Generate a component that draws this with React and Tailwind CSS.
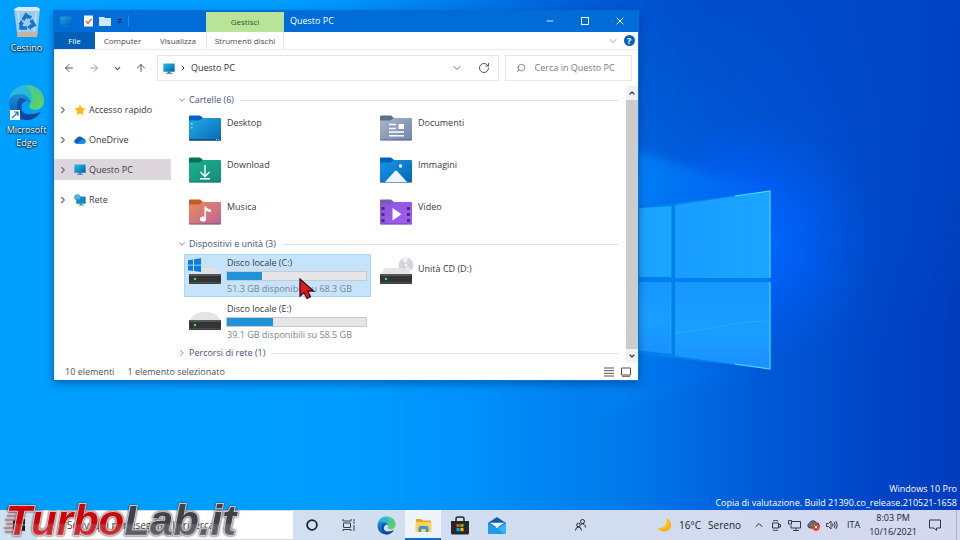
import { useState } from "react"
import { ArrowLeft, ArrowRight, ArrowUp, ChevronDown, ChevronRight, ChevronUp, Minus, RotateCw, Search, Square, X } from "lucide-react"

const folders = [
    { name: "Desktop", tab: "#0560c8", from: "#22aee8", to: "#0a68b8" },
    { name: "Documenti", tab: "#5f7288", from: "#a5b6c8", to: "#7385ae" },
    { name: "Download", tab: "#08705a", from: "#1fb08a", to: "#128c80" },
    { name: "Immagini", tab: "#0560c0", from: "#1597e6", to: "#0766b8" },
    { name: "Musica", tab: "#c0601c", from: "#f08a58", to: "#b8659c" },
    { name: "Video", tab: "#7a5cb4", from: "#8d55dc", to: "#a25cf2" },
]

const drives = [
    { name: "Disco locale (C:)", free: 51.3, total: 68.3, system: true },
    { name: "Unità CD (D:)", cd: true },
    { name: "Disco locale (E:)", free: 39.1, total: 58.5 },
]

const Wallpaper = () => (
    <svg className="absolute inset-0 h-full w-full" viewBox="0 0 960 540" preserveAspectRatio="none" aria-hidden="true">
        <defs>
            <linearGradient id="sky" x1="0" x2="1" y1="0" y2="0">
                <stop offset="0" stopColor="#00a0ff" />
                <stop offset=".35" stopColor="#009dff" />
                <stop offset=".5" stopColor="#0090fa" />
                <stop offset=".66" stopColor="#0078ea" />
                <stop offset=".8" stopColor="#0058d6" />
                <stop offset=".92" stopColor="#0044c6" />
                <stop offset="1" stopColor="#003cbc" />
            </linearGradient>
            <radialGradient id="dusk" cx="700" cy="-30" r="420" gradientUnits="userSpaceOnUse">
                <stop offset="0" stopColor="#0044c4" stopOpacity=".85" />
                <stop offset=".4" stopColor="#0048c8" stopOpacity=".5" />
                <stop offset="1" stopColor="#0060d8" stopOpacity="0" />
            </radialGradient>
            <radialGradient id="glow" cx="745" cy="240" r="130" gradientUnits="userSpaceOnUse">
                <stop offset="0" stopColor="#006cff" />
                <stop offset=".5" stopColor="#0062ff" stopOpacity=".6" />
                <stop offset="1" stopColor="#0058f0" stopOpacity="0" />
            </radialGradient>
            <linearGradient id="beam" x1="0" x2="1" y1="0" y2="0">
                <stop offset="0" stopColor="#008cff" stopOpacity=".9" />
                <stop offset="1" stopColor="#0078ff" stopOpacity=".1" />
            </linearGradient>
            <filter id="soft" x="-20%" y="-20%" width="140%" height="140%">
                <feGaussianBlur stdDeviation="5" />
            </filter>
            <linearGradient id="pane" x1="0" x2="1" y1="0" y2="0">
                <stop offset="0" stopColor="#189cff" />
                <stop offset="1" stopColor="#1aa6ff" />
            </linearGradient>
            <linearGradient id="pane2" x1="0" x2="0" y1="0" y2="1">
                <stop offset="0" stopColor="#1697ff" />
                <stop offset=".55" stopColor="#189fff" />
                <stop offset="1" stopColor="#1c90ff" />
            </linearGradient>
        </defs>
        <path d="M0 0H960V540H0Z" fill="url(#sky)" />
        <path d="M0 0H960V540H0Z" fill="url(#dusk)" />
        <path d="M560 60H960V420H560Z" fill="url(#glow)" />
        <path d="M600 140L770 191L600 215Z" fill="url(#beam)" filter="url(#soft)" />
        <path d="M600 345L770 369L720 384L600 410Z" fill="url(#beam)" opacity=".3" filter="url(#soft)" />
        <path d="M600 212L770 191V369L600 350Z" fill="#0080ee" />
        <path d="M600 211L671 206V277H600Z" fill="url(#pane)" />
        <path d="M675 205L770 191V278H675Z" fill="url(#pane)" />
        <path d="M600 282H671V354L600 346Z" fill="url(#pane2)" />
        <path d="M675 282H770V369L675 356Z" fill="url(#pane2)" />
        <path d="M675 333C710 330 735 321 770 321" stroke="#30b0ff" fill="none" opacity=".7" />
        <path d="M671 206V278M671 283V354" stroke="#30b0ff" strokeWidth=".6" />
        <path d="M735 196L770 191V278M770 282V369L735 364" stroke="#48d8ff" strokeWidth="1.200" fill="none" />
    </svg>
)

const Monitor = ({ className }) => (
    <svg className={className} viewBox="0 0 12 11" aria-hidden="true">
        <defs>
            <linearGradient id="screen" x1="0" x2="1" y1="0" y2="1">
                <stop stopColor="#25c3e2" />
                <stop offset="1" stopColor="#075fb0" />
            </linearGradient>
        </defs>
        <rect x=".3" y=".5" width="11.4" height="8.3" rx=".5" fill="url(#screen)" />
        <path d="M4.5 8.8H7.5V10H9V10.7H3V10H4.5Z" fill="#297fb0" />
    </svg>
)

const Star = () => (
    <svg className="size-3" viewBox="0 0 12 12" aria-hidden="true">
        <path d="M6 .4L7.7 4L11.7 4.5L8.8 7.2L9.5 11.3L6 9.3L2.5 11.3L3.2 7.2L.3 4.5L4.3 4Z" fill="#fdb913" />
    </svg>
)

const Cloud = () => (
    <svg className="size-3" viewBox="0 0 12 12" aria-hidden="true">
        <path d="M2.600 9.800A2.500 2.500 0 0 1 2 4.900A4 4 0 0 1 9 4.200A2.900 2.900 0 0 1 9.600 9.800Z" fill="#0f5fbc" />
        <path d="M3 9.800L8 5.500Q11.900 5.600 11.800 8.100Q11.400 9.800 9.600 9.800Z" fill="#1a90e0" />
    </svg>
)

const Network = () => (
    <svg className="size-3" viewBox="0 0 12 12" aria-hidden="true">
        <rect x="2.2" y="2.5" width="9.5" height="7.2" rx=".5" fill="#1689bd" />
        <path d="M5.8 9.7H8.5V11H10V11.6H4.5V11H5.8Z" fill="#2d8fb5" />
        <circle cx="3.3" cy="3.3" r="3" fill="#3a9cd0" />
        <path d="M1.5 2Q3.5 3 3 5M2.5 .8Q5 2 5.4 4.5" stroke="#b8e4f4" strokeWidth=".7" fill="none" />
    </svg>
)

const FolderIcon = ({ folder }) => {
    const id = `folder-${folder.name}`
    return (
        <svg className="h-[26px] w-8 shrink-0" viewBox="0 0 32 26" aria-hidden="true">
            <defs>
                <linearGradient id={id} x1="0" x2="1" y1="0" y2="1">
                    <stop stopColor={folder.from} />
                    <stop offset="1" stopColor={folder.to} />
                </linearGradient>
            </defs>
            <path d="M0 1.5Q0 .5 1 .5H11L14 3V8H0Z" fill={folder.tab} />
            <path d="M0 5.5H10L14 3H31Q32 3 32 4V24.5Q32 25.5 31 25.5H1Q0 25.5 0 24.5Z" fill={`url(#${id})`} />
            <path d="M0 24.5H32Q32 25.5 31 25.5H1Q0 25.5 0 24.5Z" fill="#183858" opacity=".45" />
            {folder.name === "Desktop" && (
                <g>
                    <path d="M0 24H32V25Q31.500 25.500 31 25.500H1Q0 25.500 0 24.500Z" fill="#124d78" />
                    <path d="M2 8H3.500V9.500H2ZM2 12H3.500V13.500H2ZM27 24H28V25H27ZM29 24H30V25H29Z" fill="#8de1f5" />
                </g>
            )}
            {folder.name === "Documenti" && (
                <path d="M9 9.500H16M9 13.500H16M9 17H24M9 20.800H24" stroke="#fff" strokeWidth="1.500" />
            )}
            {folder.name === "Documenti" && <path d="M18.500 9H24V14H18.500Z" fill="#fff" />}
            {folder.name === "Download" && (
                <path d="M16 8V19M11.500 15L16 19.500L20.500 15M11 21.800H21" stroke="#fff" strokeWidth="1.400" fill="none" />
            )}
            {folder.name === "Immagini" && (
                <g fill="#fff">
                    <circle cx="20.500" cy="9" r="1.700" />
                    <path d="M5 25L15 14Q16 13 17 14L27 25Z" fill="#f0f4ff" />
                </g>
            )}
            {folder.name === "Musica" && (
                <g fill="#fff">
                    <ellipse cx="14" cy="20" rx="3" ry="2.600" />
                    <path d="M15.500 7.500H17Q18 10.500 22 10.500V13Q19 13 17 11.500V20H15.500Z" />
                </g>
            )}
            {folder.name === "Video" && (
                <g>
                    <path d="M1.500 8H4.500V11H1.500ZM1.500 14H4.500V17H1.500ZM1.500 20H4.500V23H1.500ZM27 8H30V11H27ZM27 14H30V17H27ZM27 20H30V23H27Z" fill="#4a2c82" />
                    <path d="M12.500 9L21.500 15.300L12.500 21.500Z" fill="#fff" />
                </g>
            )}
        </svg>
    )
}

const DriveIcon = ({ drive }) => (
    <svg className="h-[30px] w-8 shrink-0" viewBox="0 0 32 30" overflow="visible" aria-hidden="true">
        {drive.cd && (
            <g>
                <circle cx="26" cy="8" r="7.500" fill="#d6d6da" />
                <path d="M26 8L22 1.600A7.500 7.500 0 0 1 28 .8ZM26 8L31 13.600A7.500 7.500 0 0 1 25 15.400Z" fill="#f1f1f4" />
                <circle cx="26" cy="8" r="2" fill="#f8f8f8" stroke="#bcbcc0" strokeWidth=".6" />
            </g>
        )}
        {drive.system || drive.cd
            ? <path d="M5 11H27L31.500 18H.500Z" fill="#e3e1e4" opacity=".9" />
            : <path d="M0 18Q3 12 9 10Q16 8 23 10Q29 12 32 18Z" fill="#e5e3e5" />}
        <rect x="0" y="17" width="32" height="10" rx=".8" fill="#333436" />
        <path d="M.500 17H31.500V19H.500Z" fill="#56575a" />
        <path d="M0 25H32V26.500H0Z" fill="#4b4a4b" />
        <circle cx="6" cy="22" r="1.200" fill="#3df052" />
        {drive.system && (
            <path d="M-1 3.200L4 2.500V7.700H-1ZM5 2.300L12 1.200V7.700H5ZM-1 8.600H4V13.900L-1 13.200ZM5 8.600H12V15L5 14Z" fill="#0a7ee0" />
        )}
    </svg>
)

const EdgeLogo = ({ className }) => (
    <svg className={className} viewBox="0 0 36 36" aria-hidden="true">
        <defs>
            <linearGradient id="edge-a" x1="0" x2="1" y1="0" y2="1">
                <stop stopColor="#28b4e8" />
                <stop offset=".6" stopColor="#28bfc9" />
                <stop offset="1" stopColor="#72dc45" />
            </linearGradient>
            <linearGradient id="edge-b" x1="0" x2="0" y1="0" y2="1">
                <stop stopColor="#1a8fdd" />
                <stop offset="1" stopColor="#0a4da5" />
            </linearGradient>
        </defs>
        <path d="M1 16C2 7 9 1 18 1C28 1 35 8 35 16C35 22 31 25 26 25C22 25 20 23 21 21C24 17 20 10 12 10C7 10 3 12 1 16Z" fill="url(#edge-a)" />
        <path d="M18 1C28 1 35 8 35 16C35 22 31 25 26 25C22 25 20 23 21 21C24 17 25 10 18 1Z" fill="#63d35a" opacity=".65" />
        <path d="M1 18C1 13 5 10 11 10C17 10 21 13 21.500 18C17 15 13 18 13 23C13 29 20 32 32 27C29 32 24 35 18 35C8 35 1 28 1 18Z" fill="url(#edge-b)" />
        <path d="M11 14C7 19 8 29 18 35C24 35 29 32 32 27C20 32 13 29 13 23C13 19 15 17 18 16.500C16 14 13 13 11 14Z" fill="#123f93" opacity=".65" />
    </svg>
)

const RecycleBin = () => (
    <svg className="h-8 w-7" viewBox="0 0 28 32" aria-hidden="true">
        <path d="M1 3L27 3L24 31H4.500Z" fill="#b9d2e6" opacity=".85" />
        <path d="M1 3L5 1H24L27 3L25 5H3Z" fill="#dde9f2" />
        <path d="M4 26H24.500L24 31H4.500Z" fill="#c9b3a0" />
        <path d="M5 6L7 26M23 6L21 26" stroke="#fff" opacity=".5" />
        <g fill="none" stroke="#1674cc" strokeWidth="3.500">
            <path d="M10 14L13 9L16 12" />
            <path d="M18 14L21 19L17 21" />
            <path d="M14 22H8L8 17" />
        </g>
        <path d="M15 9L19 10L17 14ZM18 18L14 21L18 24ZM5.500 18L8 14L11 18Z" fill="#1674cc" />
    </svg>
)

const GroupHeader = ({ children, closed }) => (
    <h2 className="flex h-4 items-center gap-[2px] text-[#44507c]">
        {closed ? <ChevronRight className="size-[10px] text-gray-500" /> : <ChevronDown className="size-[10px] text-gray-500" />}
        <span className="leading-4">{children}</span>
        <span className="ml-1 h-px flex-1 bg-[#dfe0e8]" />
    </h2>
)

const RedPointer = () => (
    <svg className="absolute left-[115px] top-[24px] z-10 h-[22px] w-4" viewBox="0 0 16 22" aria-hidden="true">
        <path d="M1 1V18L5 14.500L8 20.500L11.500 18.800L8.700 13H14.500Z" fill="#e8171b" stroke="#35101c" strokeWidth="1.300" />
    </svg>
)

const Drive = ({ drive, selected, onSelect }) => (
    <button
        onClick={onSelect}
        className={`relative flex h-[43px] gap-[6px] pl-[5px] pr-1 pt-[3px] text-left ${selected ? "bg-[#c5e4fb] outline outline-[#aad6f5] -outline-offset-1" : ""}`}
    >
        <DriveIcon drive={drive} />
        {drive.cd ? (
            <span className="mt-[6px] leading-3">{drive.name}</span>
        ) : (
            <span className="flex flex-1 flex-col gap-[2px] leading-3">
                <span>{drive.name}</span>
                <span className="-ml-px block h-[10px] border border-[#c9c8cd] bg-[#e7e5e8]">
                    <span className="block h-full bg-[#2191d9]" style={{ width: `${(1 - drive.free / drive.total) * 100}%` }} />
                </span>
                <span className="text-[#7d828c]">{drive.free} GB disponibili su {drive.total} GB</span>
            </span>
        )}
        {drive.system && <RedPointer />}
    </button>
)

const TitleBar = () => (
    <header className="flex h-[22px] items-center bg-[#006cd8] text-white">
        <div className="flex w-[152px] items-center gap-[6px] pl-[6px]">
            <Monitor className="h-[11px] w-3 opacity-70" />
            <svg className="ml-[6px] h-3 w-[9px]" viewBox="0 0 9 12" aria-hidden="true">
                <path d="M0 .500H9V11.500H0Z" fill="#f6f4f5" />
                <path d="M2 6L4 8.500L7.500 4" stroke="#e0682a" strokeWidth="1.300" fill="none" />
            </svg>
            <svg className="h-[10px] w-3" viewBox="0 0 12 10" aria-hidden="true">
                <path d="M0 1H5L6 2H12V10H0Z" fill="#cfe6fb" />
            </svg>
            <svg className="h-[5px] w-[5px]" viewBox="0 0 5 5" aria-hidden="true">
                <path d="M.500 0H4.500V1H.500ZM.200 2H4.800L2.500 4.500Z" fill="#082a58" />
            </svg>
            <span className="h-3 w-px bg-[#2a86e0]" />
        </div>
        <button className="mt-[2px] h-5 w-[78px] bg-[#b9e397] text-[8px] text-[#33592c]">Gestisci</button>
        <h1 className="ml-[6px] flex-1">Questo PC</h1>
        <button aria-label="Riduci a icona" className="flex h-full w-[35px] items-center justify-center"><Minus className="size-[10px]" strokeWidth={2} /></button>
        <button aria-label="Ingrandisci" className="flex h-full w-[35px] items-center justify-center"><span className="size-2 border border-white" /></button>
        <button aria-label="Chiudi" className="flex h-full w-[35px] items-center justify-center"><X className="size-3" strokeWidth={2} /></button>
    </header>
)

const Ribbon = () => (
    <nav className="flex h-[18px] items-center border-b border-[#ececf0] text-[8px] text-[#484850]">
        <button className="h-full w-[41px] bg-[#0060b8] text-white">File</button>
        <button className="h-full w-[55px]">Computer</button>
        <button className="h-full w-[56px]">Visualizza</button>
        <button className="h-full w-[78px] border-x border-[#e3e6e0]">Strumenti dischi</button>
        <button aria-label="Espandi barra multifunzione" className="ml-auto mr-[5px]"><ChevronDown className="size-3 text-gray-400" strokeWidth={2} /></button>
        <button aria-label="Guida" className="mr-[3px] size-[11px] rounded-full bg-[#0860bd] text-[9px] font-bold leading-[11px] text-white">?</button>
    </nav>
)

const AddressBar = () => (
    <div className="flex h-9 items-center pr-[6px]">
        <div className="flex w-[103px] items-center gap-[13px] pl-[9px] text-[#555]">
            <button aria-label="Indietro"><ArrowLeft className="size-3" strokeWidth={2} /></button>
            <button aria-label="Avanti" className="text-gray-400"><ArrowRight className="size-3" strokeWidth={2} /></button>
            <button aria-label="Recenti"><ChevronDown className="size-[9px]" strokeWidth={3} /></button>
            <button aria-label="Su"><ArrowUp className="size-3" strokeWidth={2} /></button>
        </div>
        <div className="flex h-[26px] flex-1 items-center border border-[#e6e6ea] pl-[5px] text-[#333]">
            <Monitor className="h-[11px] w-3" />
            <ChevronRight className="mx-1 size-2" strokeWidth={3} />
            <a href="#questo-pc">Questo PC</a>
            <button aria-label="Posizioni precedenti" className="ml-auto"><ChevronDown className="size-3 text-gray-500" strokeWidth={2} /></button>
            <button aria-label="Aggiorna" className="ml-[15px] mr-2"><RotateCw className="size-3 text-gray-600" strokeWidth={2} /></button>
        </div>
        <label className="ml-[6px] flex h-[26px] w-[127px] items-center gap-[9px] border border-[#e6e6ea] pl-[10px]">
            <Search className="size-[10px] shrink-0 -scale-x-100 text-gray-500" strokeWidth={2} />
            <input aria-label="Cerca in Questo PC" placeholder="Cerca in Questo PC" className="w-full min-w-0 outline-none placeholder:text-[#777b82]" />
        </label>
    </div>
)

const places = [
    { name: "Accesso rapido", icon: <Star /> },
    { name: "OneDrive", icon: <Cloud /> },
    { name: "Questo PC", icon: <Monitor className="h-[11px] w-3" /> },
    { name: "Rete", icon: <Network /> },
]

const Explorer = () => {
    const [place, setPlace] = useState("Questo PC")
    const [selected, setSelected] = useState("Disco locale (C:)")

    return (
        <section className="relative mt-[10px] w-[61%] self-start border-x border-b border-[#0a72cf] bg-white text-[9px] text-[#3a3a42] shadow-[0_3px_8px_rgba(0,30,90,0.4)]">
            <TitleBar />
            <Ribbon />
            <AddressBar />
            <div className="flex">
                <aside className="flex w-[117px] flex-col gap-[9px] pt-[13px]">
                    {places.map((p) => (
                        <button
                            key={p.name}
                            onClick={() => setPlace(p.name)}
                            className={`flex h-[21px] items-center pl-1 ${place === p.name ? "bg-[#ddd6dc]" : ""}`}
                        >
                            <ChevronRight className="mr-[6px] size-[10px] text-gray-500" strokeWidth={3} />
                            {p.icon}
                            <span className="ml-[3px]">{p.name}</span>
                        </button>
                    ))}
                </aside>
                <main className="flex-1 pb-[2px] pl-[6px] pr-2 pt-[6px]">
                    <GroupHeader>Cartelle (6)</GroupHeader>
                    <div className="mt-[2px] grid grid-cols-[187px_187px] gap-x-1 pl-[7px]">
                        {folders.map((f) => (
                            <button key={f.name} className="flex h-[42px] gap-[6px] pl-[5px] pt-[5px] text-left">
                                <FolderIcon folder={f} />
                                <span className="leading-4">{f.name}</span>
                            </button>
                        ))}
                    </div>
                    <GroupHeader>Dispositivi e unità (3)</GroupHeader>
                    <div className="mb-[2px] mt-[2px] grid grid-cols-[187px_187px] gap-x-1 gap-y-[3px] pl-[7px]">
                        {drives.map((d) => (
                            <Drive key={d.name} drive={d} selected={selected === d.name} onSelect={() => setSelected(d.name)} />
                        ))}
                    </div>
                    <GroupHeader closed>Percorsi di rete (1)</GroupHeader>
                </main>
                <div className="flex w-3 flex-col items-center bg-[#f2f1f3]">
                    <ChevronUp className="my-[3px] size-2 text-gray-700" strokeWidth={4} />
                    <span className="w-full flex-1 bg-[#cdcccd]" />
                    <ChevronDown className="my-[3px] size-2 text-gray-700" strokeWidth={4} />
                </div>
            </div>
            <footer className="flex h-[17px] items-center gap-[13px] pl-[11px] pr-[7px] text-[#4b4f60]">
                <span>10 elementi</span>
                <span>1 elemento selezionato</span>
                <span className="ml-auto flex gap-[7px]">
                    <button aria-label="Dettagli">
                        <svg className="size-[10px]" viewBox="0 0 10 10"><path d="M0 1H10M0 3.700H10M0 6.400H10M0 9H10" stroke="#555" /></svg>
                    </button>
                    <button aria-label="Icone grandi">
                        <svg className="size-[10px]" viewBox="0 0 10 10"><path d="M.500 1H9.500V8H.500ZM1 9.300H9" stroke="#555" fill="none" /></svg>
                    </button>
                </span>
            </footer>
        </section>
    )
}

const labelShadow = "[text-shadow:0_1px_2px_#000,0_0_2px_#000]"

const Desktop = () => (
    <div className="relative flex flex-1">
        <div className="flex w-[53px] flex-col items-center gap-[30px] pt-[6px] text-center text-[9px] text-white">
            <button className="flex flex-col items-center gap-1">
                <RecycleBin />
                <span className={`leading-3 ${labelShadow}`}>Cestino</span>
            </button>
            <button className="relative flex flex-col items-center gap-[2px]">
                <EdgeLogo className="size-[37px]" />
                <svg className="absolute left-[3px] top-[26px] size-[10px]" viewBox="0 0 10 10" aria-hidden="true">
                    <path d="M0 0H10V10H0Z" fill="#fff" />
                    <path d="M2 8L7.500 2.500M4 2H8V6" stroke="#1272c8" strokeWidth="1.200" fill="none" />
                </svg>
                <span className={`leading-[13px] ${labelShadow}`}>Microsoft<br />Edge</span>
            </button>
        </div>
        <Explorer />
        <div className="absolute bottom-0 right-[3px] text-right text-[9px] leading-[14px] text-white">
            <p>Windows 10 Pro</p>
            <p>Copia di valutazione. Build 21390.co_release.210521-1658</p>
        </div>
    </div>
)

const TaskButton = ({ label, active, children }) => (
    <button aria-label={label} className={`flex h-full w-9 items-center justify-center ${active ? "border-b-2 border-[#0a70c8] bg-[#edf4fc]" : ""}`}>
        {children}
    </button>
)

const Taskbar = () => (
    <footer className="relative flex h-[30px] items-center bg-linear-to-r from-[#cfe2f2] to-[#d3d8ee] text-[9px] text-[#20242c]">
        <button aria-label="Start" className="flex h-full w-[37px] items-center justify-center">
            <svg className="size-3" viewBox="0 0 12 12"><path d="M0 1.500L5 .800V5.600H0ZM5.600 .700L12 0V5.600H5.600ZM0 6.200H5V11.200L0 10.500ZM5.600 6.200H12V12L5.600 11.300Z" fill="#15181d" /></svg>
        </button>
        <label className="flex h-full w-64 items-center border-y border-[#d4dbe2] bg-white pl-[30px]">
            <input aria-label="Cerca" placeholder="Scrivi qui per eseguire la ricerca" className="w-full text-[10px] outline-none placeholder:text-[#444]" />
        </label>
        <div className="ml-px flex h-full gap-px">
            <TaskButton label="Cortana">
                <svg className="size-3" viewBox="0 0 12 12"><circle cx="6" cy="6" r="4.900" fill="none" stroke="#14202a" strokeWidth="1.700" /></svg>
            </TaskButton>
            <TaskButton label="Visualizzazione attività">
                <svg className="h-3 w-[14px]" viewBox="0 0 14 12"><path d="M1 0V2H9V0M1.500 4H8.500V8.500H1.500ZM1 12V10.500H9V12M12 0V2.500M12 6V12M11 4H13" fill="none" stroke="#3a4048" /></svg>
            </TaskButton>
            <TaskButton label="Microsoft Edge"><EdgeLogo className="size-[19px]" /></TaskButton>
            <TaskButton label="Esplora file" active>
                <svg className="mt-[2px] h-[15px] w-[17px]" viewBox="0 0 17 15">
                    <path d="M1 1H6L8 2.500H16V6H1Z" fill="#e8a522" />
                    <path d="M.500 4H16.500V14H.500Z" fill="#ffd25c" />
                    <path d="M3.500 14V10Q3.500 8 5.500 8H11.500Q13.500 8 13.500 10V14H10.700V11H6.300V14Z" fill="#3d94d8" />
                </svg>
            </TaskButton>
            <TaskButton label="Microsoft Store">
                <svg className="h-[19px] w-[18px]" viewBox="0 0 18 19">
                    <path d="M5 6V3Q5 1 7 1H11Q13 1 13 3V6" fill="none" stroke="#222529" strokeWidth="1.500" />
                    <path d="M0 5H18V17Q18 18.500 16.500 18.500H1.500Q0 18.500 0 17Z" fill="#25282c" />
                    <path d="M5.500 8H8.600V11.200H5.500Z" fill="#f25022" />
                    <path d="M9.400 8H12.500V11.200H9.400Z" fill="#7fba00" />
                    <path d="M5.500 12H8.600V15.200H5.500Z" fill="#00a4ef" />
                    <path d="M9.400 12H12.500V15.200H9.400Z" fill="#ffb900" />
                </svg>
            </TaskButton>
            <TaskButton label="Posta">
                <svg className="h-[17px] w-[18px]" viewBox="0 0 18 17">
                    <path d="M0 6L9 0L18 6V10H0Z" fill="#0a5cb4" />
                    <path d="M0 6L9 11L18 6V16Q18 17 17 17H1Q0 17 0 16Z" fill="#1e9ae8" />
                    <path d="M10 11L18 6V16Q18 17 17 17H16Z" fill="#32b6f2" />
                    <path d="M1.500 5.800H16.500L9 10.500Z" fill="#fff" />
                </svg>
            </TaskButton>
        </div>
        <button aria-label="Contatti" className="ml-auto mr-[72px]">
            <svg className="h-3 w-[11px]" viewBox="0 0 11 12" fill="none" stroke="#20242c">
                <circle cx="7.500" cy="2.500" r="2" />
                <circle cx="3.500" cy="6" r="1.800" />
                <path d="M.500 11.500Q.700 8 3.500 8Q6 8 6.500 11.500M6 5Q10 4 10.500 8.500" />
            </svg>
        </button>
        <button className="flex items-center gap-[7px] text-[10px]">
            <svg className="size-[14px]" viewBox="0 0 14 14" aria-hidden="true">
                <path d="M8.500 0Q14 3 13 8.500Q11 14 5 13.500Q1.500 13 0 10Q5 10.500 7.500 7Q9.500 4 8.500 0Z" fill="#fbc21a" />
                <path d="M0 10Q5 13 9.500 9Q13 5.500 8.500 0Q14 3 13 8.500Q11 14 5 13.500Q1.500 13 0 10Z" fill="#f6a91a" opacity=".6" />
            </svg>
            <span>16°C</span>
            <span>Sereno</span>
        </button>
        <div className="ml-3 flex items-center gap-[6px]">
            <ChevronUp className="size-3" strokeWidth={2} />
            <svg className="size-[11px]" viewBox="0 0 11 11" fill="none" stroke="#333a44" aria-hidden="true">
                <path d="M1.500 3H7.500V8H1.500ZM7.500 4.500H9.500V7H7.500M2 1Q4.500 -.200 7 1M2 10Q4.500 11.200 7 10" />
            </svg>
            <svg className="h-[11px] w-[13px]" viewBox="0 0 13 11" fill="none" stroke="#333a44" aria-hidden="true">
                <path d="M4 1.500H12.500V8H3V5M5 10.500H11M8 8V10.500M.500 .500H3.500V4H.500Z" />
            </svg>
            <svg className="h-3 w-[13px]" viewBox="0 0 13 12" aria-hidden="true">
                <path d="M3 9A2.500 2.500 0 0 1 2.500 4.200A3.800 3.800 0 0 1 9.500 4A2.500 2.500 0 0 1 10 9Z" fill="#68707a" stroke="#333a44" />
                <circle cx="9" cy="8" r="3.700" fill="#de352c" />
                <path d="M7.500 6.500L10.500 9.500M10.500 6.500L7.500 9.500" stroke="#fff" />
            </svg>
            <svg className="h-[10px] w-3" viewBox="0 0 12 10" fill="none" stroke="#333a44" aria-hidden="true">
                <path d="M.500 3.500H2.500L5 1V9L2.500 6.500H.500ZM6.500 3.500Q7.500 5 6.500 6.500M8.200 2Q10 5 8.200 8M10 1Q12.500 5 10 9" />
            </svg>
            <span className="ml-[3px]">ITA</span>
        </div>
        <time className="ml-[9px] text-center leading-[14px]">8:03 PM<br />10/16/2021</time>
        <button aria-label="Notifiche" className="ml-3 mr-[15px]">
            <svg className="size-3" viewBox="0 0 12 12" fill="none" stroke="#333a44"><path d="M.500 1H11.500V9H7.500V11.500L5 9H.500Z" /></svg>
        </button>
        <span className="mr-[3px] h-full w-px bg-[#aab4c4]" />
    </footer>
)

const SiteLogo = () => (
    <svg className="pointer-events-none absolute bottom-0 left-0 h-[42px] w-[244px] overflow-visible drop-shadow-[0_0_1px_#333]" viewBox="0 0 244 42" role="img" aria-label="TurboLab.it">
        <defs>
            <linearGradient id="logo-red" x1="0" x2="0" y1="0" y2="1">
                <stop offset=".55" stopColor="#cd0006" />
                <stop offset=".6" stopColor="#de2529" stopOpacity=".85" />
            </linearGradient>
            <linearGradient id="logo-gray" x1="0" x2="0" y1="0" y2="1">
                <stop offset=".55" stopColor="#424148" />
                <stop offset=".6" stopColor="#626168" stopOpacity=".85" />
            </linearGradient>
        </defs>
        <path d="M6 11H20M8 14H20M7 18H18M5 22H17M6 26H16M4 30H15M5 34H14" stroke="#cf3541" strokeWidth="1.200" opacity=".8" />
        <text x="6" y="37" fontFamily="Liberation Sans, sans-serif" fontSize="42" fontWeight="700" fontStyle="italic" stroke="#c9c9cd" strokeWidth="2" paintOrder="stroke">
            <tspan fill="url(#logo-red)">Turbo</tspan><tspan fill="url(#logo-gray)">Lab.it</tspan>
        </text>
    </svg>
)

export default function App() {
    return (
        <div className="relative flex min-h-screen flex-col overflow-hidden bg-[#0090ff] font-['Open_Sans','Noto_Sans',sans-serif]">
            <Wallpaper />
            <Desktop />
            <Taskbar />
            <SiteLogo />
        </div>
    )
}
